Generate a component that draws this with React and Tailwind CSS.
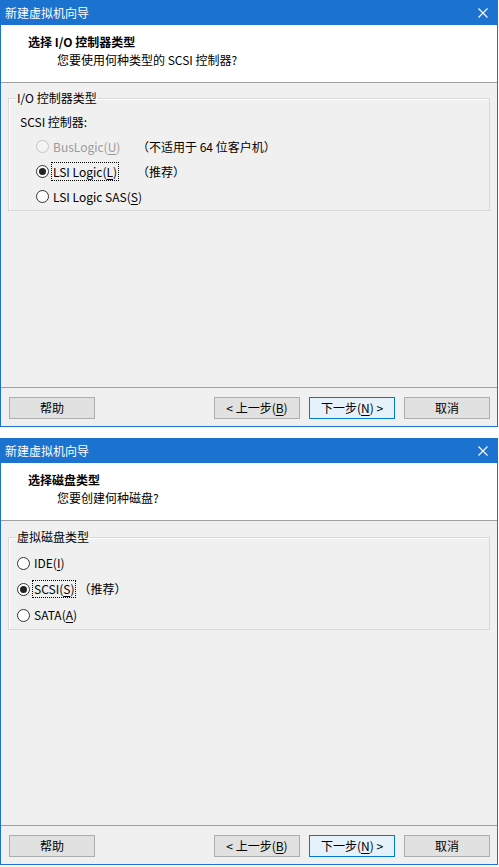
import React from "react";

function Radio({ checked, disabled }) {
  return (
    <span
      className={
        disabled
          ? "inline-flex h-[13px] w-[13px] shrink-0 items-center justify-center rounded-full border border-[#c4c4c4] bg-[#f4f4f4]"
          : "inline-flex h-[13px] w-[13px] shrink-0 items-center justify-center rounded-full border border-[#333333] bg-white"
      }
    >
      {checked && <span className="h-[7px] w-[7px] rounded-full bg-[#222222]" />}
    </span>
  );
}

function Label({ focus, children, className = "" }) {
  return (
    <span
      className={
        (focus
          ? "border border-dotted border-black px-[1px] "
          : "border border-transparent px-[1px] ") + className
      }
    >
      {children}
    </span>
  );
}

function U({ children }) {
  return <span className="underline underline-offset-[2px]">{children}</span>;
}

function Button({ primary, children }) {
  return (
    <div
      className={
        primary
          ? "flex h-[22px] w-[86px] items-center justify-center border border-[#0078d7] bg-[#e5f1fb] text-[12px] leading-[16px] text-black"
          : "flex h-[22px] w-[86px] items-center justify-center border border-[#adadad] bg-[#e1e1e1] text-[12px] leading-[16px] text-black"
      }
    >
      {children}
    </div>
  );
}

function Dialog({ heading, sub, bodyTop, children }) {
  return (
    <div className="w-[498px] border-x border-b border-[#1c72cf] bg-[#f0f0f0]">
      <div className="flex h-[25px] items-center justify-between bg-[#1c72cf] pl-[4px] pr-[9px] text-[12px] leading-[16px] text-white">
        <span>新建虚拟机向导</span>
        <svg width="10" height="10" viewBox="0 0 10 10">
          <path d="M0.5 0.5 L9.5 9.5 M9.5 0.5 L0.5 9.5" stroke="white" strokeWidth="1.1" />
        </svg>
      </div>
      <div className="h-[57px] bg-white pt-[9px] text-[12px] leading-[16px] text-black">
        <div className="pl-[27px] font-bold">{heading}</div>
        <div className="mt-[2px] pl-[56px]">{sub}</div>
      </div>
      <div className="h-px bg-[#a0a0a0]" />
      <div className={bodyTop + " h-[304px] text-[12px] leading-[16px] text-black"}>{children}</div>
      <div className="h-px bg-[#a0a0a0]" />
      <div className="flex h-[38px] items-start justify-between pl-[8px] pr-[7px] pt-[9px]">
        <Button>帮助</Button>
        <div className="flex gap-[9px]">
          <Button>
            &lt; 上一步(<U>B</U>)
          </Button>
          <Button primary>
            下一步(<U>N</U>) &gt;
          </Button>
          <Button>取消</Button>
        </div>
      </div>
    </div>
  );
}

export default function App() {
  return (
    <div className="flex h-[867px] w-[499px] flex-col gap-[11px] bg-white font-['Noto_Sans_CJK_SC',sans-serif] [font-feature-settings:'halt']">
      <Dialog
        heading="选择 I/O 控制器类型"
        sub="您要使用何种类型的 SCSI 控制器?"
        bodyTop="pt-[7px]"
      >
        <fieldset className="ml-[7px] mr-[7px] border border-[#d8d8d8] pb-[1px] shadow-[inset_1px_1px_0_#ffffff]">
          <legend className="ml-[7px] px-[1px] leading-[16px]">I/O 控制器类型</legend>
          <div className="mt-[8px] pl-[11px]">SCSI 控制器:</div>
          <div className="mt-[4px] flex h-[25px] items-center pl-[27px]">
            <Radio disabled />
            <Label className="ml-[2px] w-[92px] text-[#9a9a9a]">
              BusLogic(<U>U</U>)
            </Label>
            <span>（不适用于 64 位客户机）</span>
          </div>
          <div className="flex h-[25px] items-center pl-[27px]">
            <Radio checked />
            <span className="ml-[2px] w-[92px]">
              <Label focus>
                LSI Logic(<U>L</U>)
              </Label>
            </span>
            <span>（推荐）</span>
          </div>
          <div className="flex h-[25px] items-center pl-[27px]">
            <Radio />
            <Label className="ml-[2px]">
              LSI Logic SAS(<U>S</U>)
            </Label>
          </div>
        </fieldset>
      </Dialog>
      <Dialog heading="选择磁盘类型" sub="您要创建何种磁盘?" bodyTop="pt-[8px]">
        <fieldset className="ml-[7px] mr-[7px] border border-[#d8d8d8] pb-[1px] shadow-[inset_1px_1px_0_#ffffff]">
          <legend className="ml-[7px] px-[1px] leading-[16px]">虚拟磁盘类型</legend>
          <div className="mt-[5px] flex h-[26px] items-center pl-[8px]">
            <Radio />
            <Label className="ml-[2px]">
              IDE(<U>I</U>)
            </Label>
          </div>
          <div className="flex h-[26px] items-center pl-[8px]">
            <Radio checked />
            <Label focus className="ml-[2px]">
              SCSI(<U>S</U>)
            </Label>
            <span className="ml-[8px]">（推荐）</span>
          </div>
          <div className="flex h-[26px] items-center pl-[8px]">
            <Radio />
            <Label className="ml-[2px]">
              SATA(<U>A</U>)
            </Label>
          </div>
        </fieldset>
      </Dialog>
    </div>
  );
}
